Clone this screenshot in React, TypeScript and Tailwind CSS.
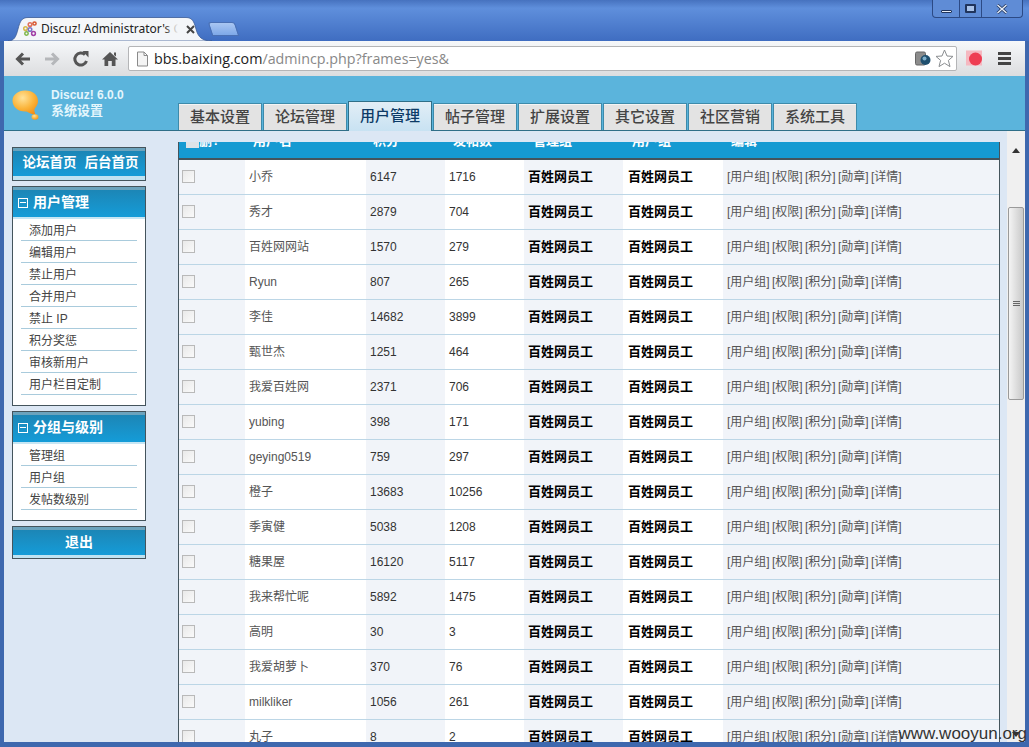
const cjk = 'font-["Liberation_Sans","Noto_Sans_CJK_SC",sans-serif]'

const tabs = ['基本设置', '论坛管理', '用户管理', '帖子管理', '扩展设置', '其它设置', '社区营销', '系统工具']

const users = [
  ['小乔', '6147', '1716'],
  ['秀才', '2879', '704'],
  ['百姓网网站', '1570', '279'],
  ['Ryun', '807', '265'],
  ['李佳', '14682', '3899'],
  ['甄世杰', '1251', '464'],
  ['我爱百姓网', '2371', '706'],
  ['yubing', '398', '171'],
  ['geying0519', '759', '297'],
  ['橙子', '13683', '10256'],
  ['季寅健', '5038', '1208'],
  ['糖果屋', '16120', '5117'],
  ['我来帮忙呢', '5892', '1475'],
  ['高明', '30', '3'],
  ['我爱胡萝卜', '370', '76'],
  ['milkliker', '1056', '261'],
  ['丸子', '8', '2'],
]

function ChromeTab() {
  return (
    <div className="relative ml-[4px] flex h-[24px] w-[204px] items-center pl-[14px] pr-[12px]">
      <svg className="absolute inset-0 h-full w-full" viewBox="0 0 204 24" fill="none">
        <path
          d="M0 24 C6 24 8 20 10 12 C12 4 14 0.5 20 0.5 H178 C184 0.5 186 4 188 12 C190 20 194 24 204 24 Z"
          fill="#f4f6f9"
          stroke="#3a5a96"
          strokeWidth="0.8"
        />
      </svg>
      <svg className="relative mr-[3px] h-[16px] w-[16px] shrink-0" viewBox="0 0 16 16" fill="none" strokeWidth="1.5">
        <circle cx="3.5" cy="7.5" r="1.8" stroke="#d8b84a" />
        <circle cx="8" cy="3.5" r="1.8" stroke="#e0705a" />
        <circle cx="12.5" cy="2.5" r="1.6" stroke="#d8552e" />
        <circle cx="8" cy="8.5" r="1.8" stroke="#7b76c8" />
        <circle cx="4.5" cy="12.5" r="1.7" stroke="#7db64a" />
        <circle cx="11.5" cy="12.5" r="1.9" stroke="#a23fa6" />
      </svg>
      <span className="relative w-[137px] shrink-0 overflow-hidden whitespace-nowrap font-['Noto_Sans',sans-serif] text-[12px] leading-[16px] text-[#222]">
        Discuz! Administrator's Console
      </span>
      <span className="absolute left-[156px] top-[4px] h-[16px] w-[14px] bg-gradient-to-r from-[#f4f6f9]/0 to-[#f4f6f9]" />
      <svg className="relative ml-[8px] h-[9px] w-[9px] shrink-0" viewBox="0 0 9 9" stroke="#444" strokeWidth="2">
        <path d="M1 1 L8 8 M8 1 L1 8" />
      </svg>
    </div>
  )
}

function WindowButtons() {
  return (
    <div className="absolute right-[6px] top-0 flex h-[18px] w-[91px] rounded-b-[4px] border border-t-0 border-[#2c4a85] bg-[#5f8cd6] text-[#dfe9f8]">
      <div className="flex w-[27px] items-end justify-center border-r border-[#2c4a85] pb-[4px]">
        <div className="h-[3px] w-[11px] rounded-[1px] border border-[#20345c] bg-[#e8eef8]" />
      </div>
      <div className="flex w-[22px] items-center justify-center border-r border-[#2c4a85]">
        <div className="h-[9px] w-[11px] rounded-[1px] border-2 border-[#20345c] bg-[#a9c2e8]" />
      </div>
      <div className="flex flex-1 items-center justify-center">
        <svg className="h-[10px] w-[12px]" viewBox="0 0 12 10" fill="none">
          <path d="M1.5 1 L10.5 9 M10.5 1 L1.5 9" stroke="#20345c" strokeWidth="3" />
          <path d="M1.5 1 L10.5 9 M10.5 1 L1.5 9" stroke="#e6eefa" strokeWidth="1.5" />
        </svg>
      </div>
    </div>
  )
}

function Toolbar() {
  return (
    <div className="flex h-[35px] items-center bg-gradient-to-b from-[#f6f8fa] to-[#dcdddf] pl-[10px] pr-[11px]">
      <svg className="h-[18px] w-[18px]" viewBox="0 0 18 18" fill="none" stroke="#555" strokeWidth="3">
        <path d="M16 9 H4 M9 3.5 L3.5 9 L9 14.5" />
      </svg>
      <svg className="ml-[11px] h-[18px] w-[18px]" viewBox="0 0 18 18" fill="none" stroke="#b5b7ba" strokeWidth="3">
        <path d="M2 9 H14 M9 3.5 L14.5 9 L9 14.5" />
      </svg>
      <svg className="ml-[11px] h-[18px] w-[18px]" viewBox="0 0 18 18" fill="none">
        <path d="M14.5 11 A6 6 0 1 1 13 4.7" stroke="#555" strokeWidth="3" />
        <path d="M10.5 1 L16.5 1 L16.5 7.5 Z" fill="#555" />
      </svg>
      <svg className="ml-[11px] h-[18px] w-[18px]" viewBox="0 0 18 18">
        <path d="M9 2 L17 9.5 H14.5 V16 H10.8 V11 H7.2 V16 H3.5 V9.5 H1 Z M13 2.5 H15 V6.5 L13 5 Z" fill="#555" />
      </svg>
      <div className="ml-[9px] flex h-[25px] w-[829px] items-center rounded-[2px] border border-[#b4b5b7] bg-white pl-[7px] pr-[2px]">
        <svg className="mr-[5px] h-[16px] w-[13px] shrink-0" viewBox="0 0 13 16" fill="#f4f4f4" stroke="#8a8a8a">
          <path d="M1.5 1 H8 L11.5 4.5 V15 H1.5 Z M8 1 V4.5 H11.5" />
        </svg>
        <span className="flex-1 whitespace-nowrap font-['Open_Sans',sans-serif] text-[14.3px] leading-[20px] text-[#888]">
          <span className="text-[#222]">bbs.baixing.com</span>/admincp.php?frames=yes&amp;
        </span>
        <svg className="h-[15px] w-[16px]" viewBox="0 0 16 15">
          <rect x="0.5" y="1" width="10" height="13" rx="1.5" fill="#8c8c8c" stroke="#666" />
          <circle cx="10.5" cy="9" r="5" fill="#1f4f6e" />
          <circle cx="9.5" cy="7.5" r="2" fill="#7fb0cc" />
        </svg>
        <svg className="ml-[4px] h-[19px] w-[19px]" viewBox="0 0 19 19" fill="#fff" stroke="#8a8d90">
          <path d="M9.5 1 L12 7 L18 7.4 L13.4 11.4 L15 17.6 L9.5 14.2 L4 17.6 L5.6 11.4 L1 7.4 L7 7 Z" />
        </svg>
      </div>
      <svg className="ml-[9px] h-[17px] w-[17px]" viewBox="0 0 17 17">
        <rect x="0" y="0.5" width="16" height="15" fill="#f5b8c0" />
        <circle cx="9.5" cy="9" r="6.5" fill="#ee3d52" />
      </svg>
      <div className="ml-[15px] flex w-[13px] flex-col gap-[2px]">
        <div className="h-[3px] bg-[#444]" />
        <div className="h-[3px] bg-[#444]" />
        <div className="h-[3px] bg-[#444]" />
      </div>
    </div>
  )
}

function Banner() {
  return (
    <div className={`relative z-10 flex h-[55px] border-b border-[#2f6f88] bg-[#5bb4dc] ${cjk}`}>
      <div className="flex w-[174px] shrink-0 pl-[8px] pt-[14px]">
        <svg className="h-[30px] w-[27px] shrink-0" viewBox="0 0 27 30">
          <defs>
            <radialGradient id="bulb" cx="0.4" cy="0.3" r="0.8">
              <stop offset="0" stopColor="#ffe39a" />
              <stop offset="0.55" stopColor="#fbb43a" />
              <stop offset="1" stopColor="#ef8a12" />
            </radialGradient>
          </defs>
          <path d="M13 0.5 C21 0.5 26 5 26 11 C26 15 23.5 17 22.5 19 C22 21 23 23.5 24 25 C20 24.5 17 22.5 14.5 21.5 C6 22 0.5 17 0.5 10.5 C0.5 5 6 0.5 13 0.5 Z" fill="url(#bulb)" />
          <ellipse cx="23" cy="27" rx="3.5" ry="2.8" fill="url(#bulb)" />
        </svg>
        <div className="ml-[12px] -mt-[2px] whitespace-nowrap text-[12px] font-bold leading-[15px] text-[#e4f6fc]">
          <div>Discuz! 6.0.0</div>
          <div className="text-[13px]">系统设置</div>
        </div>
      </div>
      <div className="flex items-end gap-[1px]">
        {tabs.map((tab, i) =>
          i === 2 ? (
            <div
              key={tab}
              className="-mb-[1px] flex h-[30px] w-[84px] items-center justify-center border border-b-0 border-[#2f6f88] bg-gradient-to-b from-[#e2eef6] to-[#c8e2f2] text-[15px] font-medium text-[#0c3a66]"
            >
              {tab}
            </div>
          ) : (
            <div
              key={tab}
              className="flex h-[27px] w-[84px] items-center justify-center border border-b-0 border-[#3d8bab] bg-[#e3e3e3] text-[15px] font-medium text-[#444] shadow-[inset_0_1px_0_#f4f4f4]"
            >
              {tab}
            </div>
          ),
        )}
      </div>
    </div>
  )
}

function MenuBox({ title, items }: { title: string; items: string[] }) {
  return (
    <div className="border border-[#44545c] bg-white">
      <div className="flex h-[30px] items-center border-t-[3px] border-t-[#6ba3bd] bg-gradient-to-b from-[#1c86b6] to-[#149cd8] pb-[2px] pl-[5px] text-[14px] font-bold text-white">
        <span className="mr-[5px] flex h-[10px] w-[10px] items-center justify-center border border-white">
          <span className="h-[1px] w-[6px] bg-white" />
        </span>
        {title}
      </div>
      <div className="h-[2px] bg-[#c6e6f4]" />
      <div className="px-[8px] pb-[10px]">
        {items.map(item => (
          <div key={item} className="h-[22px] border-b border-[#a9cbdc] pl-[8px] text-[12px] leading-[24px] text-[#444]">
            {item}
          </div>
        ))}
      </div>
    </div>
  )
}

function Sidebar() {
  return (
    <div className={`flex w-[174px] shrink-0 flex-col gap-[5px] pl-[8px] pr-[32px] pt-[16px] ${cjk}`}>
      <div className="border border-[#44545c]">
        <div className="flex h-[28px] items-center justify-center gap-[8px] border-t-[3px] border-t-[#6ba3bd] bg-gradient-to-b from-[#1c86b6] to-[#149cd8] pl-[3px] text-[13.5px] font-bold text-white">
          <span>论坛首页</span>
          <span>后台首页</span>
        </div>
        <div className="h-[4px] bg-[#bfe3f2]" />
      </div>
      <MenuBox title="用户管理" items={['添加用户', '编辑用户', '禁止用户', '合并用户', '禁止 IP', '积分奖惩', '审核新用户', '用户栏目定制']} />
      <MenuBox title="分组与级别" items={['管理组', '用户组', '发帖数级别']} />
      <div className="border border-[#44545c]">
        <div className="flex h-[28px] items-center justify-center border-t-[3px] border-t-[#6ba3bd] bg-gradient-to-b from-[#1c86b6] to-[#149cd8] pb-[1px] text-[14px] font-bold text-white">
          退出
        </div>
        <div className="h-[3px] bg-[#bfe3f2]" />
      </div>
    </div>
  )
}

function UserTable() {
  return (
    <div className="mt-[11px] w-[822px] shrink-0 overflow-hidden border-x border-[#44545c]">
      <table className={`-mt-[19px] w-[820px] table-fixed border-collapse ${cjk} text-[12px]`}>
        <colgroup>
          <col className="w-[66px]" />
          <col className="w-[121px]" />
          <col className="w-[79px]" />
          <col className="w-[79px]" />
          <col className="w-[99px]" />
          <col className="w-[100px]" />
          <col />
        </colgroup>
        <thead>
          <tr className="h-[36px] border-b-2 border-[#44545c] bg-[#159ad2] text-left text-[13px] font-bold text-white">
            <th className="pl-[7px]">
              <span className="inline-block h-[13px] w-[13px] bg-[#dde3e8] align-middle" />删?
            </th>
            <th className="pl-[8px]">用户名</th>
            <th className="pl-[7px]">积分</th>
            <th className="pl-[8px]">发帖数</th>
            <th className="pl-[9px]">管理组</th>
            <th className="pl-[9px]">用户组</th>
            <th className="pl-[8px]">编辑</th>
          </tr>
        </thead>
        <tbody>
          {users.map(([name, score, posts]) => (
            <tr key={name} className="h-[35px] border-b border-[#bcd6e6] text-[#333]">
              <td className="bg-[#f1f4f9] pl-[3px]">
                <span className="block h-[13px] w-[13px] border border-[#b9b9b9] bg-gradient-to-br from-[#e9e9e9] to-[#fafafa]" />
              </td>
              <td className="bg-white pl-[4px] text-[#555]">{name}</td>
              <td className="bg-[#f1f4f9] pl-[4px]">{score}</td>
              <td className="bg-white pl-[4px]">{posts}</td>
              <td className="bg-[#f1f4f9] pl-[4px] text-[13px] font-bold text-black">百姓网员工</td>
              <td className="bg-white pl-[5px] text-[13px] font-bold text-black">百姓网员工</td>
              <td className="whitespace-nowrap bg-[#f1f4f9] pl-[4px] text-[#555] [word-spacing:-1px]">
                [用户组] [权限] [积分] [勋章] [详情]
              </td>
            </tr>
          ))}
        </tbody>
      </table>
    </div>
  )
}

function Scrollbar() {
  return (
    <div className="ml-[7px] flex w-[18px] shrink-0 flex-col items-center bg-[#f0f0f0]">
      <svg className="mt-[17px] h-[5px] w-[8px]" viewBox="0 0 8 5" fill="#333">
        <path d="M4 0 L8 5 H0 Z" />
      </svg>
      <div className="mt-[54px] flex h-[193px] w-[16px] flex-col items-center justify-center gap-[1px] rounded-[2px] border border-[#9a9a9a] bg-gradient-to-r from-[#f4f4f4] to-[#c9c9c9]">
        <div className="h-[1px] w-[7px] bg-[#666]" />
        <div className="h-[1px] w-[7px] bg-[#666]" />
        <div className="h-[1px] w-[7px] bg-[#666]" />
      </div>
      <svg className="mb-[5px] mt-auto h-[5px] w-[8px]" viewBox="0 0 8 5" fill="#333">
        <path d="M0 0 H8 L4 5 Z" />
      </svg>
    </div>
  )
}

export default function App() {
  return (
    <div className="relative flex h-[747px] w-[1029px] flex-col overflow-hidden bg-[#3e68ae] px-[4px] pb-[5px]">
      <div className="-mx-[4px] flex h-[41px] shrink-0 items-end bg-[linear-gradient(#4672bf,#5f8fdc_20%,#3f6dc1)] px-[4px]">
        <ChromeTab />
        <div className="mb-[5px] -ml-[2px] h-[14px] w-[27px] skew-x-[18deg] rounded-t-[3px] border border-[#4a70b4] bg-gradient-to-b from-[#a9c6f2] to-[#7ea8e8]" />
      </div>
      <WindowButtons />
      <Toolbar />
      <Banner />
      <div className="flex min-h-0 flex-1 bg-[#dce7f4]">
        <Sidebar />
        <UserTable />
        <Scrollbar />
      </div>
      <div className="absolute bottom-[3px] right-[2px] font-['Liberation_Sans',sans-serif] text-[17px] leading-[20px] text-[#333]">
        www.wooyun.org
      </div>
    </div>
  )
}
